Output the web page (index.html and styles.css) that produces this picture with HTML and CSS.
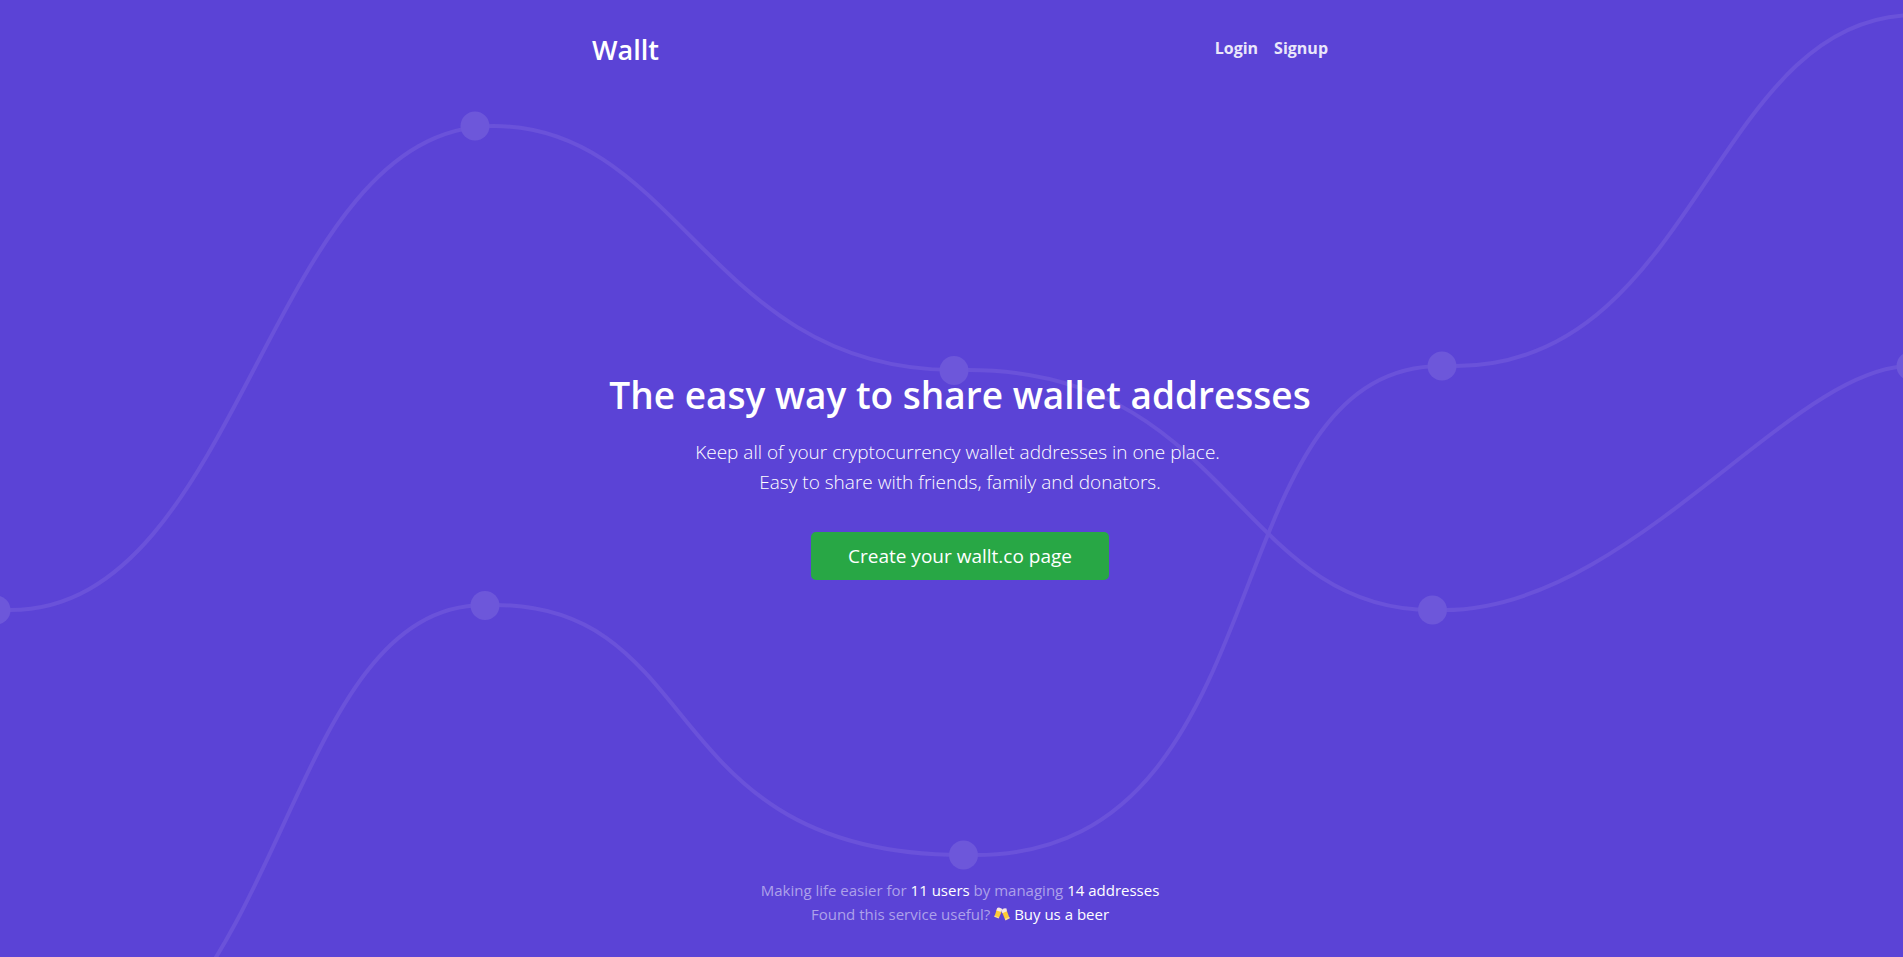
FILE: index.html
```html
<!DOCTYPE html>
<html lang="en">
<head>
<meta charset="utf-8">
<title>Wallt</title>
<link rel="stylesheet" href="styles.css">
</head>
<body>
<svg class="backdrop" viewBox="0 0 1903 957" preserveAspectRatio="xMidYMid slice" aria-hidden="true">
  <g class="backdrop-lines">
    <path d="M-4 610H10C245 610 266 126 494 126C680 126 710 370 954 370H968C1230 370 1237 610 1432 610H1444C1630 610 1790 366 1911 366"/>
    <path d="M10 1094C290 1094 270 605 485 605H495C708 605 655 855 963 855H975C1290 855 1206 366 1442 366H1456C1697 366 1713 15 1915 15"/>
  </g>
  <g class="backdrop-dots">
    <circle cx="-4" cy="610" r="14.5"/>
    <circle cx="475" cy="126" r="14.5"/>
    <circle cx="954" cy="370.500" r="14.5"/>
    <circle cx="1432.500" cy="610" r="14.5"/>
    <circle cx="1911" cy="366" r="14.5"/>
    <circle cx="485" cy="605.500" r="14.5"/>
    <circle cx="963.500" cy="855" r="14.5"/>
    <circle cx="1442" cy="366" r="14.5"/>
  </g>
</svg>
<div class="cover">
  <header class="masthead">
    <a class="brand" href="#">Wallt</a>
    <nav class="nav">
      <a href="#">Login</a>
      <a href="#">Signup</a>
    </nav>
  </header>
  <main class="hero">
    <h1>The easy way to share wallet addresses</h1>
    <p class="lead">Keep all of your cryptocurrency wallet addresses in one place.&nbsp;<br>Easy to share with friends, family and donators.</p>
    <a class="cta" href="#">Create your wallt.co page</a>
  </main>
  <footer class="footer">
    <p>Making life easier for <strong>11 users</strong> by managing <strong>14 addresses</strong></p>
    <p>Found this service useful?
      <svg class="beers" viewBox="0 0 16 16" aria-hidden="true">
        <path d="M2.600 3.800L7.600 5.800L4.900 12L.6 10.200z" fill="#fdcb35"/>
        <path d="M3.200 2Q5 .4 8.300 3L7.400 6L2.300 4.500z" fill="#f7e6df"/>
        <path d="M.5 9.500L5.200 11.500L4.700 12.600L.2 10.800z" fill="#f9dc91"/>
        <path d="M8.200 6.600L12.800 4.800L15.500 12L11.300 14z" fill="#fdcb35"/>
        <path d="M7.600 4.300Q9.500 1.500 12.500 2.600L13 5.300L8.300 7.200z" fill="#f7e6df"/>
        <path d="M10.800 12.700L15.300 11L15.800 12.300L11.500 14.400z" fill="#f9dc91"/>
      </svg>
      <a href="#">Buy us a beer</a></p>
  </footer>
</div>
</body>
</html>
```
FILE: styles.css
```css
* {
  box-sizing: border-box;
}

html,
body {
  height: 100%;
}

body {
  margin: 0;
  padding-left: 17px;
  overflow: hidden;
  background: #5b43d6;
  color: #fff;
  font-family: "Segoe UI", "Open Sans", "Noto Sans", sans-serif;
  font-size: 15px;
  line-height: 24px;
}

a {
  color: inherit;
  text-decoration: none;
}

.backdrop {
  position: absolute;
  inset: 0;
  width: 100%;
  height: 100%;
  z-index: -1;
}

.backdrop-lines {
  fill: none;
  stroke: #6a52da;
  stroke-width: 4;
}

.backdrop-dots {
  fill: #6d57da;
}

.cover {
  display: flex;
  flex-direction: column;
  justify-content: space-between;
  max-width: 768px;
  min-height: 100%;
  margin: 0 auto;
  padding: 32px 16px 31px;
  text-align: center;
}

.masthead {
  display: flex;
  justify-content: space-between;
}

.brand {
  font-size: 27px;
  font-weight: 600;
  line-height: 36px;
}

.nav {
  display: flex;
  gap: 16px;
  padding-top: 4px;
  font-size: 16px;
  font-weight: 700;
  color: #eae7fa;
}

.hero {
  padding-top: 4px;
}

.hero h1 {
  margin: 0 0 18px;
  font-size: 37px;
  font-weight: 600;
  line-height: 48px;
}

.lead {
  margin: 0 0 35px;
  font-size: 19px;
  font-weight: 300;
  line-height: 30px;
}

.cta {
  display: inline-block;
  padding: 9px 37px;
  border-radius: 5px;
  background: #28a745;
  font-size: 19px;
  line-height: 30px;
}

.footer {
  color: #ada1ea;
}

.footer p {
  margin: 0;
}

.footer strong,
.footer a {
  color: #fff;
  font-weight: 400;
}

.beers {
  width: 16px;
  height: 16px;
  vertical-align: -2px;
}
```
